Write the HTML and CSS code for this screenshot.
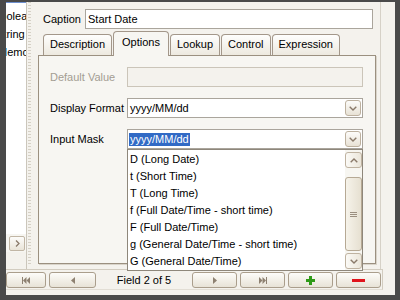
FILE: index.html
```html
<!DOCTYPE html>
<html lang="en">
  <head>
    <meta charset="UTF-8" />
    <title>Field editor</title>
    <link rel="stylesheet" href="styles.css">
  </head>
  <body>
    <div class="frame">
      <div class="top">
        <div class="fieldlist">
          <div class="fl-items">
            <div class="fl-item shift-bo">Boolean</div>
            <div class="fl-item shift-st">String</div>
            <div class="fl-item shift-me">Memo</div>
          </div>
          <div class="fl-hscroll">
            <div class="mini-btn">
              <svg width="5" height="7" viewBox="0 0 5 7"><polyline points="1,0.5 4,3.5 1,6.5" fill="none" stroke="#8a7a6a" stroke-width="1.3"/></svg>
            </div>
          </div>
          <div class="fl-rest"></div>
        </div>

        <div class="splitter"><div class="grip"></div></div>

        <div class="editor">
          <div class="caption-row">
            <label class="caption-label">Caption</label>
            <div class="textbox">Start Date</div>
          </div>

          <div class="tabs">
            <div class="tab">Description</div>
            <div class="tab active">Options</div>
            <div class="tab">Lookup</div>
            <div class="tab">Control</div>
            <div class="tab">Expression</div>
          </div>

          <div class="tabpanel">
            <div class="row">
              <span class="label disabled">Default Value</span>
              <div class="textbox wide disabled-box"></div>
            </div>
            <div class="row">
              <span class="label">Display Format</span>
              <div class="combo">
                <span class="value">yyyy/MM/dd</span>
                <div class="drop-btn">
                  <svg width="8" height="5" viewBox="0 0 8 5"><polyline points="0.7,0.7 4,4 7.3,0.7" fill="none" stroke="#8a7a6a" stroke-width="1.4"/></svg>
                </div>
              </div>
            </div>
            <div class="row">
              <span class="label">Input Mask</span>
              <div class="combo">
                <span class="value selected">yyyy/MM/dd</span>
                <div class="drop-btn">
                  <svg width="8" height="5" viewBox="0 0 8 5"><polyline points="0.7,0.7 4,4 7.3,0.7" fill="none" stroke="#8a7a6a" stroke-width="1.4"/></svg>
                </div>

                <div class="droplist">
                  <div class="items">
                    <div class="item">D (Long Date)</div>
                    <div class="item">t (Short Time)</div>
                    <div class="item">T (Long Time)</div>
                    <div class="item">f (Full Date/Time - short time)</div>
                    <div class="item">F (Full Date/Time)</div>
                    <div class="item">g (General Date/Time - short time)</div>
                    <div class="item">G (General Date/Time)</div>
                  </div>
                  <div class="vscroll">
                    <div class="sb-btn">
                      <svg width="8" height="5" viewBox="0 0 8 5"><polyline points="0.7,4.3 4,1 7.3,4.3" fill="none" stroke="#8a7a6a" stroke-width="1.4"/></svg>
                    </div>
                    <div class="thumb">
                      <span></span><span></span><span></span>
                    </div>
                    <div class="sb-btn down">
                      <svg width="8" height="5" viewBox="0 0 8 5"><polyline points="0.7,0.7 4,4 7.3,0.7" fill="none" stroke="#8a7a6a" stroke-width="1.4"/></svg>
                    </div>
                  </div>
                </div>
              </div>
            </div>
          </div>
        </div>
      </div>

      <div class="navbar">
        <div class="nav-btn first">
          <svg width="8" height="7" viewBox="0 0 8 7"><rect x="0" y="0" width="1" height="7" fill="#8e8171"/><polygon points="4.5,0 1,3.5 4.5,7" fill="#8e8171"/><polygon points="8,0 4.5,3.5 8,7" fill="#8e8171"/></svg>
        </div>
        <div class="nav-btn prev">
          <svg width="4" height="7" viewBox="0 0 4 7"><polygon points="4,0 0,3.5 4,7" fill="#8e8171"/></svg>
        </div>
        <div class="nav-label">Field 2 of 5</div>
        <div class="nav-btn">
          <svg width="4" height="7" viewBox="0 0 4 7"><polygon points="0,0 4,3.5 0,7" fill="#8e8171"/></svg>
        </div>
        <div class="nav-btn">
          <svg width="8" height="7" viewBox="0 0 8 7"><polygon points="0,0 3.5,3.5 0,7" fill="#8e8171"/><polygon points="3.5,0 7,3.5 3.5,7" fill="#8e8171"/><rect x="7" y="0" width="1" height="7" fill="#8e8171"/></svg>
        </div>
        <div class="nav-btn">
          <svg width="9" height="9" viewBox="0 0 9 9"><rect x="3" y="0" width="3" height="9" fill="#2f9a18"/><rect x="0" y="3" width="9" height="3" fill="#2f9a18"/></svg>
        </div>
        <div class="nav-btn">
          <svg width="13" height="3" viewBox="0 0 13 3"><rect x="0" y="0" width="13" height="3" fill="#e0141c"/></svg>
        </div>
      </div>
    </div>
  </body>
</html>
```

FILE: styles.css
```css
* {
  box-sizing: border-box;
}

body {
  margin: 0;
  background: #4a4a4a;
  font-family: "Liberation Sans", Arial, sans-serif;
  font-size: 11px;
  color: #000;
}

.frame {
  margin: 2px 0 0 6px;
  width: 389px;
  height: 293px;
  background: #f4f2ed;
  display: flex;
  flex-direction: column;
}

.top {
  display: flex;
  height: 267px;
}

/* left field list */
.fieldlist {
  width: 21px;
  display: flex;
  flex-direction: column;
  border-right: 1px solid #cbc6bb;
}

.fl-items {
  height: 232px;
  background: #fff;
  border-top: 1px solid #6d8fcf;
  padding-top: 4px;
  overflow: hidden;
}

.fl-item {
  height: 18px;
  line-height: 18px;
  white-space: nowrap;
}

.shift-bo { margin-left: -13px; }
.shift-st { margin-left: -10px; }
.shift-me { margin-left: -8px; }

.fl-hscroll {
  height: 18px;
  background: #f7f6f2;
  display: flex;
  justify-content: flex-end;
  align-items: center;
  padding-right: 1px;
}

.mini-btn {
  width: 16px;
  height: 15px;
  border: 1px solid #c1b6a5;
  border-radius: 2px;
  background: linear-gradient(#fdfcfa, #e9e4d8);
  display: flex;
  align-items: center;
  justify-content: center;
}

.fl-rest {
  flex: 1;
}

.splitter {
  width: 6px;
  padding: 0 2px 0 1px;
}

.grip {
  height: 262px;
  background-image: linear-gradient(#d5d0c5 50%, transparent 50%);
  background-size: 3px 3px;
}

/* right side editor */
.editor {
  width: 348px;
  border-right: 1px solid #d6d1c7;
  padding-top: 7px;
}

.caption-row {
  display: flex;
  align-items: center;
  height: 20px;
}

.caption-label {
  width: 52px;
  padding-left: 10px;
}

.textbox {
  width: 288px;
  height: 20px;
  border: 1px solid #aaa59c;
  background: #fff;
  padding-left: 2px;
  line-height: 18px;
}

.tabs {
  display: flex;
  align-items: flex-end;
  gap: 1px;
  height: 24px;
  margin-top: 2px;
  padding-left: 10px;
  position: relative;
  z-index: 2;
}

.tab {
  height: 21px;
  padding: 3px 6px 0;
  border: 1px solid #a3978a;
  border-bottom: none;
  border-radius: 4px 4px 0 0;
  background: linear-gradient(#fefefd, #ede9df);
  white-space: nowrap;
}

.tab.active {
  height: 25px;
  padding: 4px 8px 0;
  margin-bottom: -1px;
  background: #f7f6f2;
}

.tabpanel {
  margin-left: 5px;
  width: 338px;
  height: 209px;
  border: 1px solid #9b9080;
  box-shadow: 1px 1px 0 #d9d4ca;
  background: #f7f6f2;
  padding: 11px 0 0 11px;
}

.row {
  display: flex;
  align-items: center;
  height: 20px;
  margin-bottom: 11px;
}

.label {
  width: 77px;
}

.label.disabled {
  color: #a39d92;
}

.textbox.wide {
  width: 236px;
}

.disabled-box {
  background: #f4f2ed;
  border-color: #cbc5b9;
}

.combo {
  position: relative;
  width: 236px;
  height: 20px;
  border: 1px solid #aaa59c;
  background: #fff;
  display: flex;
  align-items: center;
  padding: 0 1px 0 1px;
}

.value {
  padding: 0 1px;
  line-height: 13px;
}

.value.selected {
  background: #316ac5;
  color: #fff;
}

.drop-btn {
  margin-left: auto;
  width: 16px;
  height: 16px;
  border: 1px solid #bdb19f;
  border-radius: 3px;
  background: linear-gradient(#fdfcfa, #e8e2d5);
  display: flex;
  align-items: center;
  justify-content: center;
}

.droplist {
  position: absolute;
  top: 19px;
  left: -1px;
  width: 236px;
  height: 122px;
  border: 1px solid #8e877b;
  background: #fff;
  display: flex;
  z-index: 10;
}

.items {
  flex: 1;
  padding-top: 1px;
  overflow: hidden;
}

.item {
  height: 17px;
  line-height: 17px;
  padding-left: 2px;
  white-space: nowrap;
}

.vscroll {
  width: 17px;
  background: #f7f6f1;
  display: flex;
  flex-direction: column;
  padding: 2px 0 1px;
}

.sb-btn {
  height: 16px;
  border: 1px solid #bfb3a1;
  border-radius: 3px;
  background: linear-gradient(90deg, #fbfaf6, #ebe6da);
  display: flex;
  align-items: center;
  justify-content: center;
}

.sb-btn.down {
  margin-top: auto;
}

.thumb {
  margin-top: 9px;
  height: 74px;
  border: 1px solid #b6a994;
  border-radius: 3px;
  background: linear-gradient(90deg, #f6f3ea, #e6e0d1);
  display: flex;
  flex-direction: column;
  align-items: center;
  justify-content: center;
  gap: 1px;
}

.thumb span {
  width: 7px;
  height: 1px;
  background: #9b8f80;
}

/* record navigator */
.navbar {
  width: 377px;
  height: 21px;
  border-top: 1px solid #d2ccc0;
  border-right: 1px solid #d2ccc0;
  border-bottom: 1px solid #e2ded5;
  padding-top: 2px;
  display: flex;
  align-items: flex-start;
  gap: 3px;
}

.nav-btn {
  width: 45px;
  height: 16px;
  border: 1px solid #aa9e8c;
  border-radius: 3px;
  background: linear-gradient(#fdfcf9, #e8e3d7);
  display: flex;
  align-items: center;
  justify-content: center;
}

.nav-btn.first {
  width: 40px;
}

.nav-btn.prev {
  width: 47px;
}

.nav-label {
  width: 96px;
  margin: 0 -3px;
  text-align: center;
  line-height: 16px;
}
```
